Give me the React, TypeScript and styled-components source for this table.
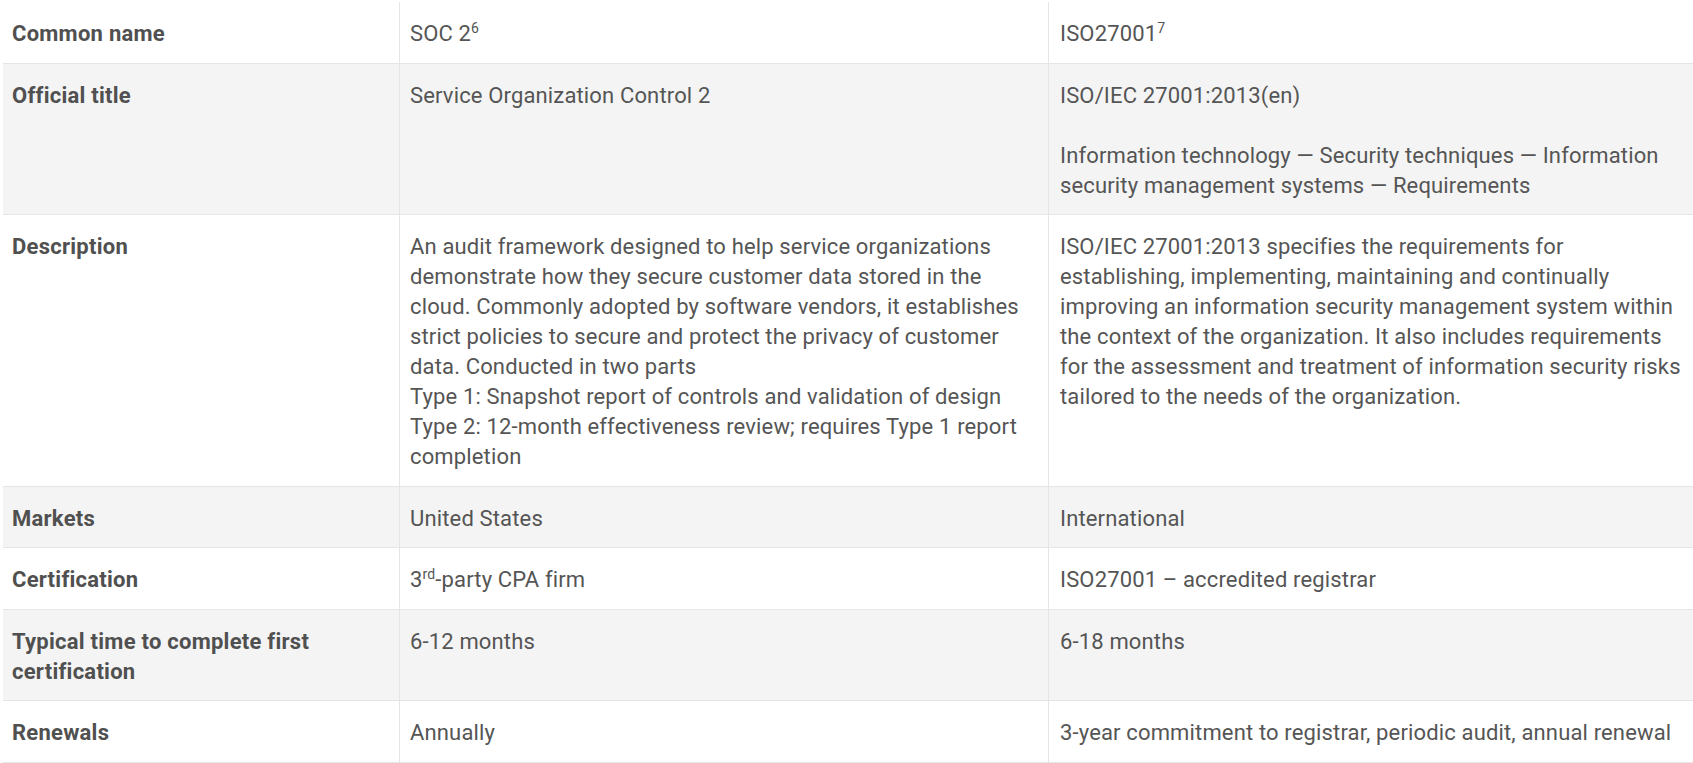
import React from 'react';
import styled, { createGlobalStyle } from 'styled-components';

const GlobalStyle = createGlobalStyle`
  html, body { margin: 0; padding: 0; background: #ffffff; }
  body { font-family: Roboto, "Liberation Sans", Arial, sans-serif; }
`;

const Table = styled.div`
  display: flex;
  flex-direction: column;
  margin: 2px 0 0 3px;
  width: 1690px;
  font-size: 22px;
  line-height: 30px;
  color: #555555;
  letter-spacing: 0.15px;
`;

const Row = styled.div<{ $shade: boolean }>`
  display: grid;
  grid-template-columns: 396px 649px 645px;
  background: ${(p) => (p.$shade ? '#f4f4f4' : '#ffffff')};
  border-bottom: 1px solid #e5e5e5;
`;

const Label = styled.div`
  padding: 17px 10px 13.5px 9px;
  font-weight: 700;
  color: #505050;
  letter-spacing: 0.25px;
`;

const Value = styled.div<{ $last?: boolean }>`
  padding: 17px 10px 13.5px ${(p) => (p.$last ? '11px' : '10px')};
  border-left: 1px solid #e5e5e5;
`;

const Para = styled.p`
  margin: 0;
  & + & { margin-top: 30px; }
`;

const Sup = styled.sup`
  font-size: 14px;
  line-height: 0;
  vertical-align: 8px;
`;

type RowData = { label: string; a: React.ReactNode; b: React.ReactNode };

const rows: RowData[] = [
  {
    label: 'Common name',
    a: (
      <>
        SOC 2<Sup>6</Sup>
      </>
    ),
    b: (
      <>
        ISO27001<Sup>7</Sup>
      </>
    ),
  },
  {
    label: 'Official title',
    a: 'Service Organization Control 2',
    b: (
      <>
        <Para>ISO/IEC 27001:2013(en)</Para>
        <Para>Information technology — Security techniques — Information security management systems — Requirements</Para>
      </>
    ),
  },
  {
    label: 'Description',
    a: (
      <>
        An audit framework designed to help service organizations demonstrate how they secure customer data stored in the cloud. Commonly adopted by software vendors, it establishes strict policies to secure and protect the privacy of customer data. Conducted in two parts
        <br />
        Type 1: Snapshot report of controls and validation of design
        <br />
        Type 2: 12-month effectiveness review; requires Type 1 report completion
      </>
    ),
    b: 'ISO/IEC 27001:2013 specifies the requirements for establishing, implementing, maintaining and continually improving an information security management system within the context of the organization. It also includes requirements for the assessment and treatment of information security risks tailored to the needs of the organization.',
  },
  { label: 'Markets', a: 'United States', b: 'International' },
  {
    label: 'Certification',
    a: (
      <>
        3<Sup>rd</Sup>-party CPA firm
      </>
    ),
    b: 'ISO27001 – accredited registrar',
  },
  { label: 'Typical time to complete first certification', a: '6-12 months', b: '6-18 months' },
  { label: 'Renewals', a: 'Annually', b: '3-year commitment to registrar, periodic audit, annual renewal' },
];

export default function App() {
  return (
    <>
      <GlobalStyle />
      <Table>
        {rows.map((r, i) => (
          <Row key={r.label} $shade={i % 2 === 1}>
            <Label>{r.label}</Label>
            <Value>{r.a}</Value>
            <Value $last>{r.b}</Value>
          </Row>
        ))}
      </Table>
    </>
  );
}
